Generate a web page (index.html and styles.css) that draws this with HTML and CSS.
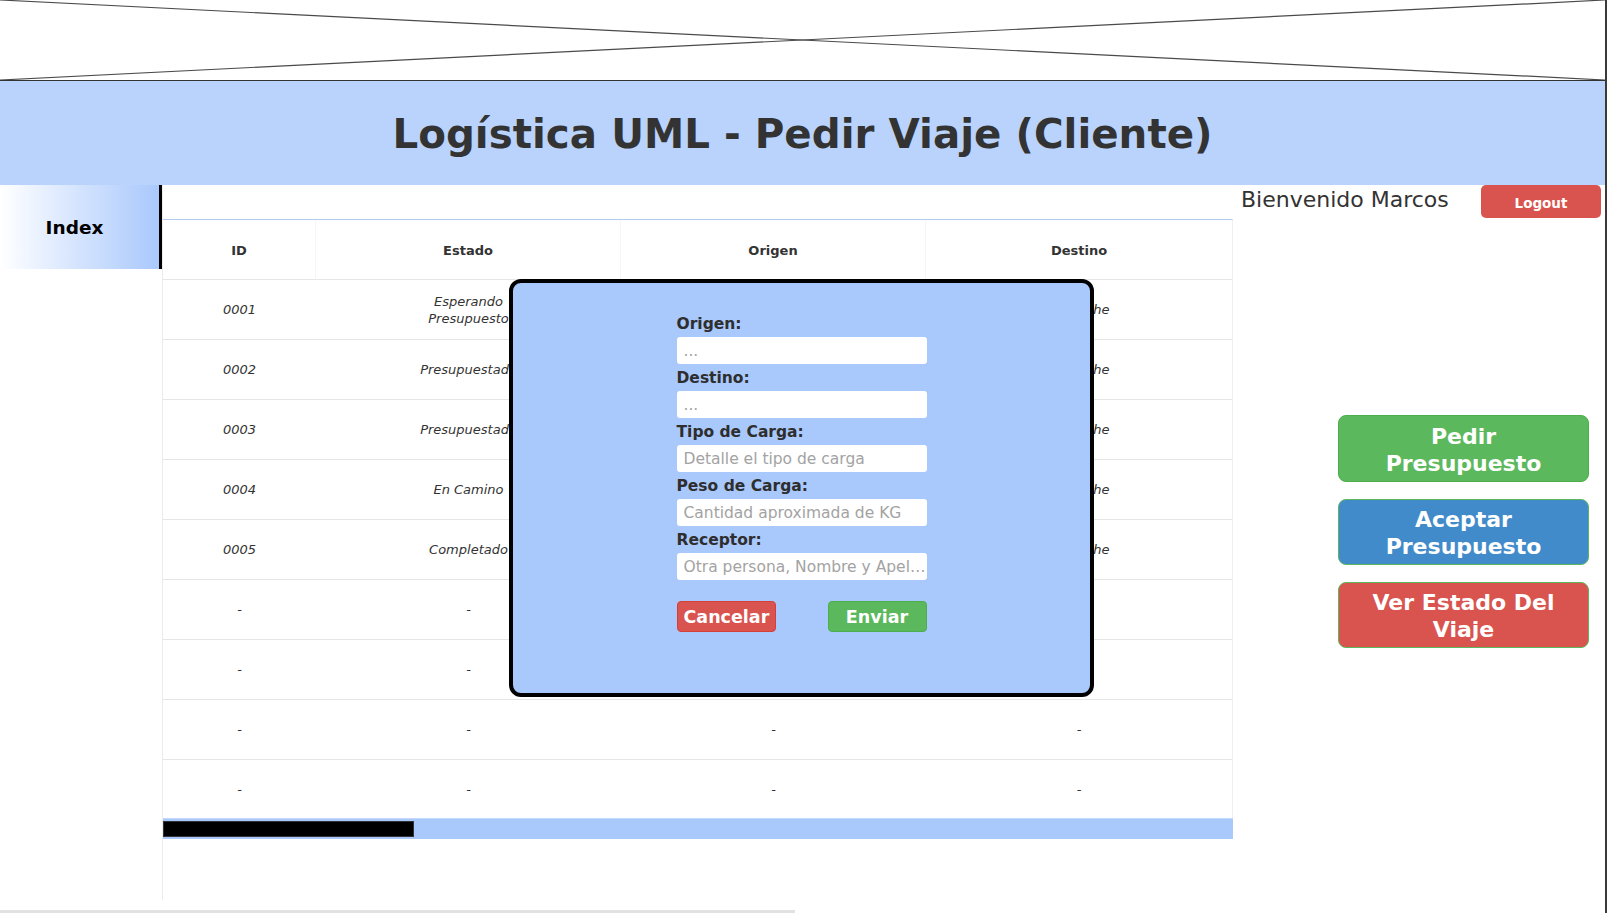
FILE: index.html
```html
<!DOCTYPE html>
<html lang="es">
<head>
<meta charset="utf-8">
<title>Logística UML - Pedir Viaje (Cliente)</title>
<link rel="stylesheet" href="styles.css">
</head>
<body>
<div class="page">
  <div class="banner">
    <svg class="banner-x" viewBox="0 0 1605 80" preserveAspectRatio="none" width="1605" height="80" aria-hidden="true">
      <line x1="0" y1="0" x2="1605" y2="80"></line>
      <line x1="1605" y1="0" x2="0" y2="80"></line>
    </svg>
  </div>
  <header class="title-bar">
    <h1 class="title">Logística UML - Pedir Viaje (Cliente)</h1>
  </header>
  <div class="main">
    <nav class="sidebar">
      <a class="nav-item" href="#">Index</a>
    </nav>
    <section class="content">
      <table class="trips">
        <thead>
          <tr><th class="c-id">ID</th><th class="c-estado">Estado</th><th class="c-origen">Origen</th><th class="c-destino">Destino</th></tr>
        </thead>
        <tbody>
          <tr><td>0001</td><td><span class="wrap">Esperando Presupuesto</span></td><td>Buenos Aires</td><td>Bariloche</td></tr>
          <tr><td>0002</td><td>Presupuestado</td><td>Córdoba</td><td>Bariloche</td></tr>
          <tr><td>0003</td><td>Presupuestado</td><td>Rosario</td><td>Bariloche</td></tr>
          <tr><td>0004</td><td>En Camino</td><td>Mendoza</td><td>Bariloche</td></tr>
          <tr><td>0005</td><td>Completado</td><td>Salta</td><td>Bariloche</td></tr>
          <tr><td>-</td><td>-</td><td>-</td><td>-</td></tr>
          <tr><td>-</td><td>-</td><td>-</td><td>-</td></tr>
          <tr><td>-</td><td>-</td><td>-</td><td>-</td></tr>
          <tr class="last"><td>-</td><td>-</td><td>-</td><td>-</td></tr>
        </tbody>
      </table>
      <div class="hscroll"><div class="hscroll-thumb"></div></div>
    </section>
    <aside class="side">
      <div class="user-row">
        <span class="welcome">Bienvenido Marcos</span>
        <button class="btn-logout" type="button">Logout</button>
      </div>
      <div class="actions">
        <button class="action action-green" type="button">Pedir Presupuesto</button>
        <button class="action action-blue" type="button">Aceptar Presupuesto</button>
        <button class="action action-red" type="button">Ver Estado Del Viaje</button>
      </div>
    </aside>
  </div>

  <div class="modal">
    <form class="trip-form">
      <label class="f-label">Origen:</label>
      <input class="f-input" type="text" placeholder="...">
      <label class="f-label">Destino:</label>
      <input class="f-input" type="text" placeholder="...">
      <label class="f-label">Tipo de Carga:</label>
      <input class="f-input" type="text" placeholder="Detalle el tipo de carga">
      <label class="f-label">Peso de Carga:</label>
      <input class="f-input" type="text" placeholder="Cantidad aproximada de KG">
      <label class="f-label">Receptor:</label>
      <input class="f-input" type="text" placeholder="Otra persona, Nombre y Apellido">
      <div class="form-actions">
        <button class="btn-cancel" type="button">Cancelar</button>
        <button class="btn-send" type="button">Enviar</button>
      </div>
    </form>
  </div>
</div>
<div class="page-scroll"></div>
</body>
</html>
```

FILE: styles.css
```css
* { box-sizing: border-box; }

html, body {
  margin: 0;
  padding: 0;
  background: #fff;
  overflow: hidden;
}

body {
  font-family: "DejaVu Sans", Verdana, sans-serif;
  color: #333;
  width: 1609px;
  height: 913px;
}

.page {
  position: relative;
  width: 1607px;
  height: 913px;
  border-right: 2px solid #3a3a3a;
}

/* top image placeholder */
.banner {
  height: 81px;
  border-bottom: 1px solid #333;
}
.banner-x {
  display: block;
}
.banner-x line {
  stroke: #4a4a4a;
  stroke-width: 1.2;
}

/* title */
.title-bar {
  height: 104px;
  background: #b9d3fd;
  display: flex;
  align-items: center;
  justify-content: center;
}
.title {
  margin: 0;
  font-size: 40.4px;
  font-weight: bold;
  color: #333;
  line-height: 1;
  padding-top: 2px;
}

.main {
  display: flex;
  align-items: flex-start;
}

/* sidebar */
.sidebar {
  width: 162px;
  flex: none;
}
.nav-item {
  display: flex;
  align-items: center;
  justify-content: center;
  height: 84px;
  background: linear-gradient(to right, #ffffff, #a9c8fc);
  border-right: 3px solid #000;
  color: #000;
  font-weight: bold;
  font-size: 18.5px;
  text-decoration: none;
  padding-right: 10px;
}

/* table area */
.content {
  width: 1071px;
  flex: none;
  height: 715px;
  border-left: 1px solid #ececec;
  padding-top: 34px;
}

.trips {
  width: 1070px;
  border-collapse: separate;
  border-spacing: 0;
  border-top: 1px solid #b3cbe8;
  border-right: 1px solid #f0f0f0;
  table-layout: fixed;
  font-size: 13px;
}
.trips th {
  height: 60px;
  padding: 2px 0 0;
  font-weight: bold;
  color: #333;
  border-bottom: 1px solid #e6e6e6;
  border-right: 1px solid #f6f6f6;
  text-align: center;
}
.trips th:last-child { border-right: none; }
.c-id { width: 153px; }
.c-estado { width: 305px; }
.c-origen { width: 305px; }
.c-destino { width: 306px; }

.trips td {
  height: 60px;
  padding: 0;
  text-align: center;
  font-style: italic;
  color: #333;
  border-bottom: 1px solid #e6e6e6;
  line-height: 17px;
}
.trips tr.last td {
  height: 58px;
  border-bottom: none;
}
.wrap {
  display: inline-block;
  max-width: 86px;
}

.hscroll {
  width: 1070px;
  height: 21px;
  background: #a9c8fc;
  border-top: 1px solid #c4d8fc;
  padding-top: 2px;
}
.hscroll-thumb {
  width: 251px;
  height: 16px;
  background: #000;
  border: 1px solid #333;
}

/* right side */
.side {
  width: 372px;
  flex: none;
}
.user-row {
  display: flex;
  align-items: flex-start;
  justify-content: space-between;
  padding-left: 8px;
  padding-right: 4px;
}
.welcome {
  font-size: 22px;
  line-height: 26px;
  padding-top: 2px;
  color: #333;
}
.btn-logout {
  width: 120px;
  height: 33px;
  border: none;
  border-radius: 5px;
  background: #d9534f;
  color: #fff;
  font-family: "DejaVu Sans", Verdana, sans-serif;
  font-weight: bold;
  font-size: 13.5px;
  padding: 2px 0 0;
}

.actions {
  margin-top: 197px;
  display: flex;
  flex-direction: column;
  align-items: flex-end;
  gap: 17px;
  padding-right: 16px;
}
.action {
  width: 251px;
  height: 66px;
  border-radius: 8px;
  border: 1px solid #5cb85c;
  color: #fff;
  font-family: "DejaVu Sans", Verdana, sans-serif;
  font-weight: bold;
  font-size: 22px;
  line-height: 27px;
  padding: 2px 24px 0;
  text-align: center;
}
.action-green { background: #5cb85c; border-color: #4cae4c; height: 67px; }
.action-blue { background: #428bca; }
.action-red { background: #d9534f; }

/* modal */
.modal {
  position: absolute;
  left: 509px;
  top: 279px;
  width: 585px;
  height: 418px;
  background: #a9c8fc;
  border: 4px solid #000;
  border-radius: 12px;
}
.trip-form {
  width: 250px;
  margin: 0 auto;
  padding-top: 27px;
  display: flex;
  flex-direction: column;
}
.f-label {
  height: 27px;
  line-height: 29px;
  font-family: "DejaVu Sans", Verdana, sans-serif;
  font-weight: bold;
  font-size: 15.5px;
  color: #2e2e2e;
}
.f-input {
  height: 27px;
  width: 250px;
  border: none;
  border-radius: 3px;
  background: #fff;
  padding: 0 1px 0 7px;
  font-family: "DejaVu Sans", Verdana, sans-serif;
  font-size: 15.5px;
  color: #333;
  outline: none;
  text-overflow: ellipsis;
}
.f-input::placeholder {
  color: #a3a3a3;
}
.form-actions {
  margin-top: 21px;
  display: flex;
  justify-content: space-between;
}
.btn-cancel,
.btn-send {
  height: 31px;
  border-radius: 4px;
  color: #fff;
  font-family: "DejaVu Sans", Verdana, sans-serif;
  font-weight: bold;
  font-size: 17.5px;
  padding: 0 6px;
}
.btn-cancel {
  background: #d9534f;
  border: 1px solid #d43f3a;
}
.btn-send {
  width: 99px;
  background: #5cb85c;
  border: 1px solid #4cae4c;
}

/* page horizontal scrollbar hint */
.page-scroll {
  position: fixed;
  left: 0;
  bottom: 0;
  width: 795px;
  height: 3px;
  background: #e2e2e2;
}
```
